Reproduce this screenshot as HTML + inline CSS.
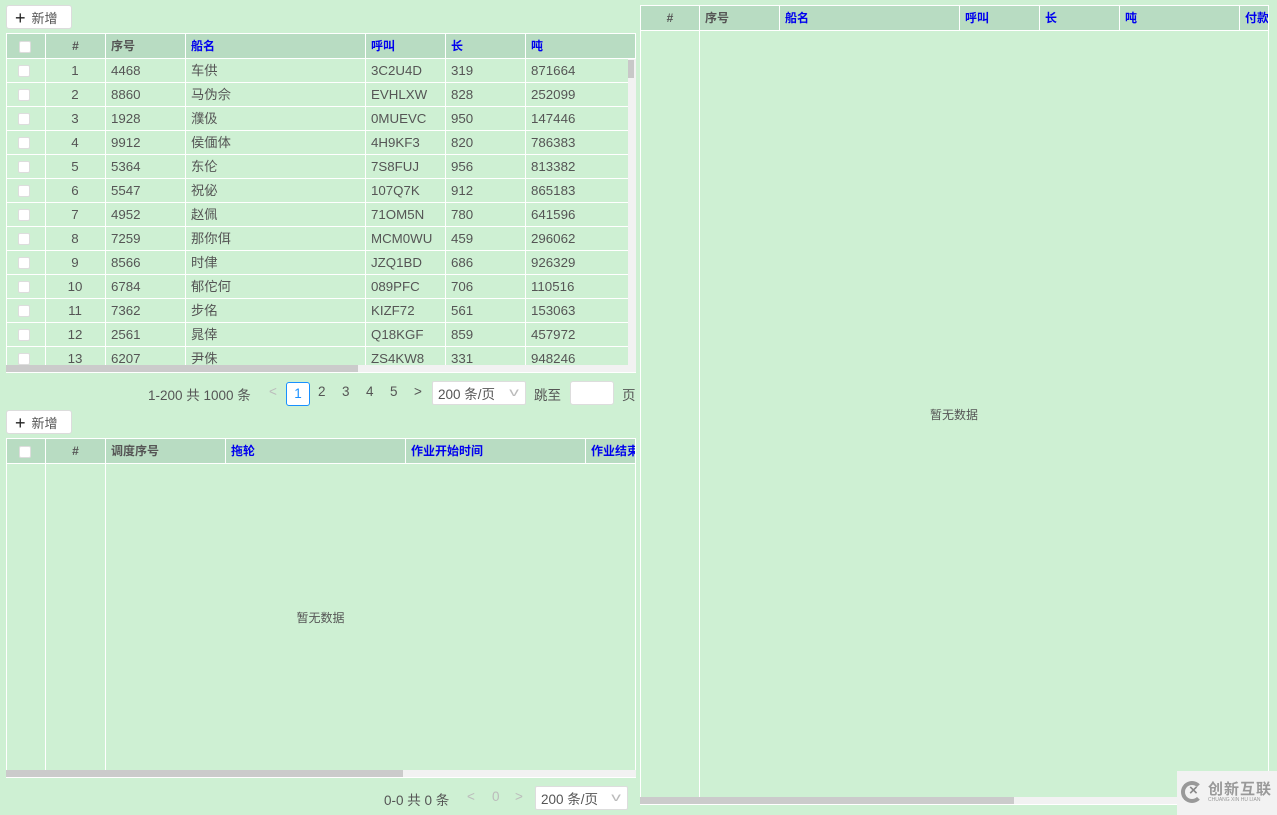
<!DOCTYPE html>
<html><head><meta charset="utf-8"><style>
*{box-sizing:border-box;margin:0;padding:0}
body{width:1277px;height:815px;background:#cef0d3;font-family:"Liberation Sans","Noto Sans CJK SC",sans-serif;font-size:13px;color:#555;position:relative;overflow:hidden}
.a{position:absolute}
.btn{position:absolute;background:#fff;border:1px solid #dcdcdc;border-radius:3px;height:24px;width:66px;font-size:13px;line-height:22px;padding-left:8px;color:#555}
.btn b{font-weight:normal;font-size:18px;color:#222;margin-right:6px;position:relative;top:1px}
.hd{position:absolute;background:#b8dcc2;border:1px solid #fff;height:26px}
.c{position:absolute;top:0;height:100%;border-left:1px solid #fff;font-size:12px;line-height:24px;padding-left:5px;font-weight:bold;color:#555}
.bl{color:#0000ee}
.row{position:absolute;left:6px;width:622px;height:24px;border-bottom:1px solid #fff}
.row span{position:absolute;top:0;line-height:24px;font-size:13.3px}
.cb{position:absolute;width:12px;height:12px;background:#fff;border:1px solid #ddd;border-radius:2px}
.vl{position:absolute;width:1px;background:#fff}
.pg{position:absolute;font-size:13.5px}
.sel{position:absolute;background:#fff;border:1px solid #ddd;border-radius:2px;height:24px;line-height:22px;padding-left:5px;font-size:13.5px}
.sel i{position:absolute;right:8px;top:-1px;color:#bbb;font-style:normal;font-size:12px;transform:scaleX(1.6)}
</style></head><body>

<div class="btn" style="left:6px;top:5px"><b>+</b>新增</div>

<div class="a" style="left:6px;top:33px;width:630px;height:340px;border:1px solid #fff;border-top:0"></div>
<div class="hd" style="left:6px;top:33px;width:630px">
 <div class="cb" style="left:12px;top:7px"></div>
 <div class="c" style="left:38px;width:60px;padding:0;text-align:center">#</div>
 <div class="c" style="left:98px">序号</div>
 <div class="c bl" style="left:178px">船名</div>
 <div class="c bl" style="left:358px">呼叫</div>
 <div class="c bl" style="left:438px">长</div>
 <div class="c bl" style="left:518px">吨</div>
</div>
<div class="vl" style="left:45px;top:58px;height:307px"></div>
<div class="vl" style="left:105px;top:58px;height:307px"></div>
<div class="vl" style="left:185px;top:58px;height:307px"></div>
<div class="vl" style="left:365px;top:58px;height:307px"></div>
<div class="vl" style="left:445px;top:58px;height:307px"></div>
<div class="vl" style="left:525px;top:58px;height:307px"></div>
<div class="a" style="left:0;top:0;width:640px;height:365px;overflow:hidden">
<div class="row" style="top:59px"><div class="cb" style="left:12px;top:6px"></div><span style="left:39px;width:60px;text-align:center">1</span><span style="left:105px">4468</span><span style="left:185px">车供</span><span style="left:365px">3C2U4D</span><span style="left:445px">319</span><span style="left:525px">871664</span></div>
<div class="row" style="top:83px"><div class="cb" style="left:12px;top:6px"></div><span style="left:39px;width:60px;text-align:center">2</span><span style="left:105px">8860</span><span style="left:185px">马伪佘</span><span style="left:365px">EVHLXW</span><span style="left:445px">828</span><span style="left:525px">252099</span></div>
<div class="row" style="top:107px"><div class="cb" style="left:12px;top:6px"></div><span style="left:39px;width:60px;text-align:center">3</span><span style="left:105px">1928</span><span style="left:185px">濮伋</span><span style="left:365px">0MUEVC</span><span style="left:445px">950</span><span style="left:525px">147446</span></div>
<div class="row" style="top:131px"><div class="cb" style="left:12px;top:6px"></div><span style="left:39px;width:60px;text-align:center">4</span><span style="left:105px">9912</span><span style="left:185px">侯偭体</span><span style="left:365px">4H9KF3</span><span style="left:445px">820</span><span style="left:525px">786383</span></div>
<div class="row" style="top:155px"><div class="cb" style="left:12px;top:6px"></div><span style="left:39px;width:60px;text-align:center">5</span><span style="left:105px">5364</span><span style="left:185px">东伦</span><span style="left:365px">7S8FUJ</span><span style="left:445px">956</span><span style="left:525px">813382</span></div>
<div class="row" style="top:179px"><div class="cb" style="left:12px;top:6px"></div><span style="left:39px;width:60px;text-align:center">6</span><span style="left:105px">5547</span><span style="left:185px">祝佖</span><span style="left:365px">107Q7K</span><span style="left:445px">912</span><span style="left:525px">865183</span></div>
<div class="row" style="top:203px"><div class="cb" style="left:12px;top:6px"></div><span style="left:39px;width:60px;text-align:center">7</span><span style="left:105px">4952</span><span style="left:185px">赵佩</span><span style="left:365px">71OM5N</span><span style="left:445px">780</span><span style="left:525px">641596</span></div>
<div class="row" style="top:227px"><div class="cb" style="left:12px;top:6px"></div><span style="left:39px;width:60px;text-align:center">8</span><span style="left:105px">7259</span><span style="left:185px">那你佴</span><span style="left:365px">MCM0WU</span><span style="left:445px">459</span><span style="left:525px">296062</span></div>
<div class="row" style="top:251px"><div class="cb" style="left:12px;top:6px"></div><span style="left:39px;width:60px;text-align:center">9</span><span style="left:105px">8566</span><span style="left:185px">时侓</span><span style="left:365px">JZQ1BD</span><span style="left:445px">686</span><span style="left:525px">926329</span></div>
<div class="row" style="top:275px"><div class="cb" style="left:12px;top:6px"></div><span style="left:39px;width:60px;text-align:center">10</span><span style="left:105px">6784</span><span style="left:185px">郁佗何</span><span style="left:365px">089PFC</span><span style="left:445px">706</span><span style="left:525px">110516</span></div>
<div class="row" style="top:299px"><div class="cb" style="left:12px;top:6px"></div><span style="left:39px;width:60px;text-align:center">11</span><span style="left:105px">7362</span><span style="left:185px">步佲</span><span style="left:365px">KIZF72</span><span style="left:445px">561</span><span style="left:525px">153063</span></div>
<div class="row" style="top:323px"><div class="cb" style="left:12px;top:6px"></div><span style="left:39px;width:60px;text-align:center">12</span><span style="left:105px">2561</span><span style="left:185px">晁倖</span><span style="left:365px">Q18KGF</span><span style="left:445px">859</span><span style="left:525px">457972</span></div>
<div class="row" style="top:347px"><div class="cb" style="left:12px;top:6px"></div><span style="left:39px;width:60px;text-align:center">13</span><span style="left:105px">6207</span><span style="left:185px">尹侏</span><span style="left:365px">ZS4KW8</span><span style="left:445px">331</span><span style="left:525px">948246</span></div>
</div>
<div class="a" style="left:628px;top:59px;width:8px;height:306px;background:#f2f2f2"></div>
<div class="a" style="left:628px;top:60px;width:6px;height:18px;background:#c8c8c8"></div>
<div class="a" style="left:6px;top:365px;width:630px;height:7px;background:#f2f2f2"></div>
<div class="a" style="left:6px;top:365px;width:352px;height:7px;background:#cbcbcb"></div>

<div class="pg" style="left:148px;top:384px">1-200 共 1000 条</div>
<div class="pg" style="left:269px;top:384px;color:#bbb">&lt;</div>
<div class="a" style="left:286px;top:382px;width:24px;height:24px;border:1px solid #1890ff;border-radius:3px;background:#fff;color:#1890ff;text-align:center;line-height:22px;font-size:13.5px">1</div>
<div class="pg" style="left:318px;top:384px">2</div>
<div class="pg" style="left:342px;top:384px">3</div>
<div class="pg" style="left:366px;top:384px">4</div>
<div class="pg" style="left:390px;top:384px">5</div>
<div class="pg" style="left:414px;top:384px">&gt;</div>
<div class="sel" style="left:432px;top:381px;width:94px;padding-top:2px">200 条/页<i>v</i></div>
<div class="pg" style="left:534px;top:384px">跳至</div>
<div class="a" style="left:570px;top:381px;width:44px;height:24px;background:#fff;border:1px solid #ddd;border-radius:3px"></div>
<div class="pg" style="left:622px;top:384px">页</div>

<div class="btn" style="left:6px;top:410px"><b>+</b>新增</div>
<div class="a" style="left:6px;top:438px;width:630px;height:340px;border:1px solid #fff;border-top:0"></div>
<div class="hd" style="left:6px;top:438px;width:630px">
 <div class="cb" style="left:12px;top:7px"></div>
 <div class="c" style="left:38px;width:60px;padding:0;text-align:center">#</div>
 <div class="c" style="left:98px">调度序号</div>
 <div class="c bl" style="left:218px">拖轮</div>
 <div class="c bl" style="left:398px">作业开始时间</div>
 <div class="c bl" style="left:578px;width:50px;overflow:hidden;white-space:nowrap">作业结束</div>
</div>
<div class="vl" style="left:45px;top:463px;height:307px"></div>
<div class="vl" style="left:105px;top:463px;height:307px"></div>
<div class="a" style="left:106px;top:609px;width:429px;text-align:center;font-size:12px">暂无数据</div>
<div class="a" style="left:6px;top:770px;width:630px;height:7px;background:#f2f2f2"></div>
<div class="a" style="left:6px;top:770px;width:397px;height:7px;background:#cbcbcb"></div>

<div class="pg" style="left:384px;top:789px">0-0 共 0 条</div>
<div class="pg" style="left:467px;top:789px;color:#bbb">&lt;</div>
<div class="pg" style="left:492px;top:789px;color:#bbb">0</div>
<div class="pg" style="left:515px;top:789px;color:#bbb">&gt;</div>
<div class="sel" style="left:535px;top:786px;width:93px;padding-top:2px">200 条/页<i>v</i></div>

<div class="a" style="left:640px;top:5px;width:629px;height:800px;border:1px solid #fff;border-top:0"></div>
<div class="hd" style="left:640px;top:5px;width:629px;overflow:hidden">
 <div class="c" style="left:0;width:58px;padding:0;text-align:center;border:0">#</div>
 <div class="c" style="left:58px">序号</div>
 <div class="c bl" style="left:138px">船名</div>
 <div class="c bl" style="left:318px">呼叫</div>
 <div class="c bl" style="left:398px">长</div>
 <div class="c bl" style="left:478px">吨</div>
 <div class="c bl" style="left:598px;white-space:nowrap">付款</div>
</div>
<div class="vl" style="left:699px;top:30px;height:767px"></div>
<div class="a" style="left:700px;top:406px;width:508px;text-align:center;font-size:12px">暂无数据</div>
<div class="a" style="left:640px;top:797px;width:629px;height:7px;background:#f2f2f2"></div>
<div class="a" style="left:640px;top:797px;width:374px;height:7px;background:#cbcbcb"></div>

<div class="a" style="left:1177px;top:771px;width:100px;height:44px;background:#f2f2f2"></div>
<div class="a" style="left:1181px;top:781px;width:22px;height:22px;border:4px solid #999;border-radius:50%;border-right-color:transparent"></div>
<div class="a" style="left:1189px;top:782px;font-weight:bold;color:#888;font-size:15px">×</div>
<div class="a" style="left:1208px;top:778px;font-size:15px;color:#999;font-weight:bold;letter-spacing:1px">创新互联</div>
<div class="a" style="left:1208px;top:797px;font-size:5px;color:#999">CHUANG XIN HU LIAN</div>
</body></html>
